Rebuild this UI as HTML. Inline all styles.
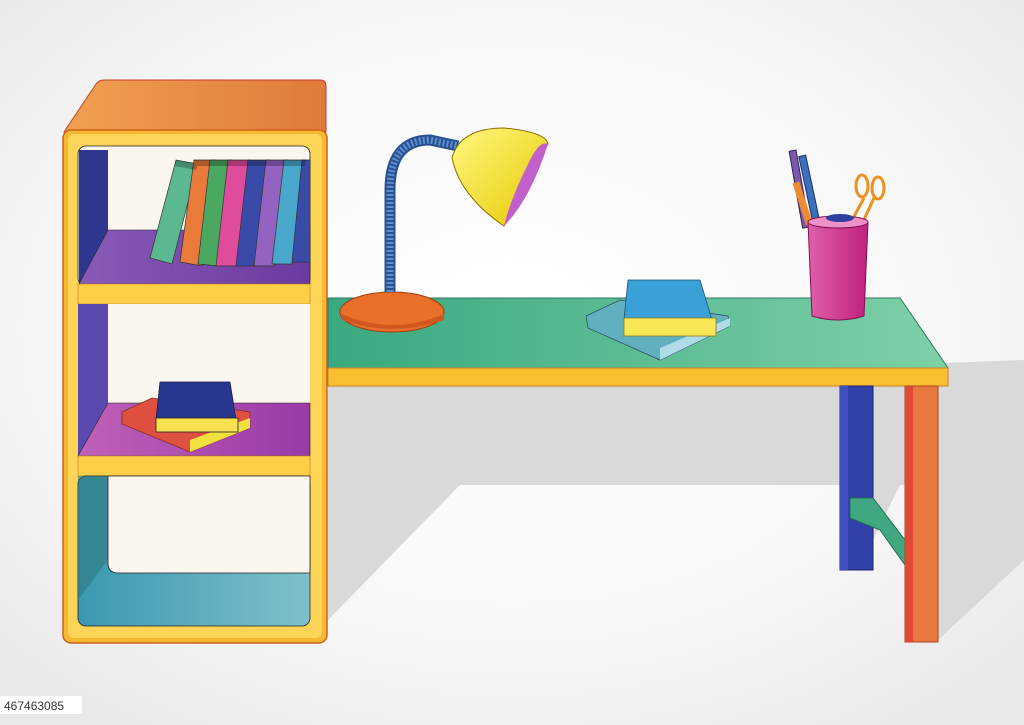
<!DOCTYPE html>
<html><head><meta charset="utf-8"><style>
html,body{margin:0;padding:0;width:1024px;height:725px;overflow:hidden;background:#f2f2f2}
svg{display:block}
</style></head><body>
<svg width="1024" height="725" viewBox="0 0 1024 725" xmlns="http://www.w3.org/2000/svg">
<defs>
<radialGradient id="bg" cx="0.5" cy="0.45" r="0.7">
<stop offset="0" stop-color="#ffffff"/><stop offset="0.6" stop-color="#f8f8f8"/><stop offset="1" stop-color="#e8e8e8"/></radialGradient>
<linearGradient id="top" x1="0" y1="0" x2="1" y2="0"><stop offset="0" stop-color="#f0a050"/><stop offset="1" stop-color="#e07a3a"/></linearGradient>
<linearGradient id="shelf" x1="0" y1="0" x2="1" y2="0"><stop offset="0" stop-color="#8a5ab8"/><stop offset="1" stop-color="#6a3aa0"/></linearGradient>
<linearGradient id="shelf2" x1="0" y1="0" x2="1" y2="0"><stop offset="0" stop-color="#c060b8"/><stop offset="1" stop-color="#9a3aa8"/></linearGradient>
<linearGradient id="teal" x1="0" y1="0" x2="1" y2="0"><stop offset="0" stop-color="#3a98b0"/><stop offset="1" stop-color="#80c0cc"/></linearGradient>
<linearGradient id="desk" x1="0" y1="0" x2="1" y2="0"><stop offset="0" stop-color="#3aa880"/><stop offset="1" stop-color="#7ed0a8"/></linearGradient>
<linearGradient id="cup" x1="0" y1="0" x2="1" y2="0"><stop offset="0" stop-color="#e060a8"/><stop offset="1" stop-color="#c02080"/></linearGradient>
<linearGradient id="shade" x1="0" y1="0" x2="1" y2="1"><stop offset="0" stop-color="#fff880"/><stop offset="1" stop-color="#e8c800"/></linearGradient>
</defs>
<rect width="1024" height="725" fill="url(#bg)"/>
<polygon points="328,386 1024,360 1024,485 328,485" fill="#d9d9d9"/>
<polygon points="328,485 460,485 328,620" fill="#d9d9d9"/>
<polygon points="938,485 1024,485 1024,560 938,640" fill="#d9d9d9"/>
<polygon points="873,485 900,485 873,540" fill="#d9d9d9"/>
<path d="M64,132 L96,84 Q99,80 104,80 L320,80 Q326,80 326,86 L326,132 Z" fill="url(#top)" stroke="#c04030" stroke-width="1"/>
<rect x="63" y="130" width="264" height="513" rx="8" fill="#f5b830" stroke="#d06020" stroke-width="1.5"/>
<rect x="68" y="134" width="254" height="504" rx="6" fill="#fcd458"/>
<rect x="78" y="146" width="232" height="140" rx="8" fill="#fbf6ee" stroke="#222" stroke-width="0.8"/>
<polygon points="79,150 108,150 108,230 79,284" fill="#2e3690"/>
<polygon points="79,284 108,230 310,230 310,284" fill="url(#shelf)" stroke="#222" stroke-width="0.6"/>
<rect x="78" y="284" width="232" height="20" fill="#fbd048" stroke="#c08020" stroke-width="0.6"/>
<rect x="78" y="304" width="232" height="152" fill="#fbf6ee"/>
<polygon points="78,304 108,304 108,403 78,456" fill="#5a4ab0"/>
<polygon points="78,456 108,403 310,403 310,456" fill="url(#shelf2)" stroke="#222" stroke-width="0.6"/>
<rect x="78" y="456" width="232" height="20" fill="#fbd048" stroke="#c08020" stroke-width="0.6"/>
<rect x="78" y="476" width="232" height="150" rx="8" fill="url(#teal)" stroke="#222" stroke-width="0.8"/>
<polygon points="78,476 108,476 108,560 78,600" fill="#2e7a80" opacity="0.6"/>
<path d="M108,476 L310,476 L310,573 L118,573 Q108,573 108,563 Z" fill="#fbf6ee" stroke="#222" stroke-width="0.8"/>
<!-- books on top shelf -->
<g stroke="#333" stroke-width="0.7">
<polygon points="150,258 176,160 198,164 172,264" fill="#5cb890"/>
<polygon points="180,262 194,160 216,160 202,266" fill="#ea7a3a"/>
<polygon points="198,264 210,160 232,160 218,266" fill="#4aa860"/>
<polygon points="216,266 228,160 250,160 238,266" fill="#e04c9c"/>
<polygon points="236,266 248,160 270,160 256,266" fill="#3a4aa8"/>
<polygon points="254,266 266,160 288,160 274,266" fill="#9462c0"/>
<polygon points="272,264 284,160 306,160 292,264" fill="#48a8cc"/>
<polygon points="292,262 302,160 310,160 310,262" fill="#3a4aa8"/>
</g>
<g fill="#000" opacity="0.25">
<polygon points="176,160 198,164 196,170 175,166"/>
<polygon points="194,160 216,160 215,166 193,166"/>
<polygon points="210,160 232,160 231,166 209,166"/>
<polygon points="228,160 250,160 249,166 227,166"/>
<polygon points="248,160 270,160 269,166 247,166"/>
<polygon points="266,160 288,160 287,166 265,166"/>
<polygon points="284,160 306,160 305,166 283,166"/>
</g>
<polygon points="122,412 152,398 250,412 250,428 190,452 122,424" fill="#e05040" stroke="#803020" stroke-width="0.8"/>
<polygon points="190,440 250,418 250,428 190,452" fill="#f0e040"/>
<polygon points="160,382 230,382 236,420 156,420" fill="#283890" stroke="#201850" stroke-width="0.8"/>
<rect x="156" y="418" width="82" height="14" fill="#f8e050" stroke="#222" stroke-width="0.8"/>
<polygon points="328,298 900,298 948,368 328,368" fill="url(#desk)" stroke="#2a7a60" stroke-width="1"/>
<rect x="328" y="368" width="620" height="18" fill="#f8c030" stroke="#d08020" stroke-width="1"/>
<rect x="840" y="386" width="33" height="184" fill="#3040a8" stroke="#202070"/>
<rect x="840" y="386" width="8" height="184" fill="#4050c0"/>
<polygon points="850,498 873,498 905,540 905,565 880,530 850,518" fill="#40a880" stroke="#207050"/>
<rect x="905" y="386" width="33" height="256" fill="#e87840" stroke="#b04020"/>
<rect x="905" y="386" width="8" height="256" fill="#e04838"/>
<ellipse cx="392" cy="312" rx="52" ry="20" fill="#e8702a" stroke="#a04010"/>
<path d="M342,314 Q392,336 444,314 L444,320 Q392,338 342,320 Z" fill="#d05820"/>
<path d="M390,292 L390,190 Q390,140 430,140 L458,146" fill="none" stroke="#2a5090" stroke-width="11"/>
<path d="M390,292 L390,190 Q390,140 430,140 L458,146" fill="none" stroke="#5a90d0" stroke-width="7" stroke-dasharray="2 2"/>
<path d="M452,158 Q460,128 504,128 Q546,132 548,144 L504,226 Q460,196 452,158 Z" fill="url(#shade)" stroke="#8a7000"/>
<path d="M548,144 Q540,140 530,160 Q510,200 504,226 Q530,200 548,144 Z" fill="#c060c8"/>
<polygon points="586,316 620,300 728,316 730,326 660,360 588,328" fill="#60b0c0" stroke="#305060" stroke-width="0.8"/>
<polygon points="660,348 730,318 730,326 660,360" fill="#b0dce8"/>
<polygon points="628,280 700,280 712,320 624,320" fill="#3aa0d8" stroke="#205070" stroke-width="0.8"/>
<rect x="624" y="318" width="92" height="18" fill="#f8e858" stroke="#8a7a20" stroke-width="0.8"/>
<rect x="796" y="150" width="7" height="78" transform="rotate(-10 800 190)" fill="#7a5ab0" stroke="#302050"/>
<rect x="806" y="155" width="7" height="74" transform="rotate(-12 810 190)" fill="#3a70c0" stroke="#203060"/>
<rect x="798" y="182" width="7" height="44" transform="rotate(-18 800 200)" fill="#f08a30"/>
<g fill="none" stroke="#f09020" stroke-width="3">
<ellipse cx="862" cy="186" rx="6" ry="11"/><ellipse cx="878" cy="188" rx="6" ry="11"/>
<path d="M864,198 L850,224 M874,198 L862,224"/></g>
<path d="M808,222 L868,222 L864,316 Q838,324 812,316 Z" fill="url(#cup)" stroke="#801050"/>
<ellipse cx="838" cy="222" rx="30" ry="6" fill="#f090c8" stroke="#801050"/>
<ellipse cx="840" cy="218" rx="14" ry="4" fill="#3040a0"/>
<rect x="0" y="696" width="82" height="18" fill="#ffffff"/>
<text x="4" y="710" font-family="Liberation Sans, sans-serif" font-size="12" fill="#333">467463085</text>
</svg>
</body></html>
